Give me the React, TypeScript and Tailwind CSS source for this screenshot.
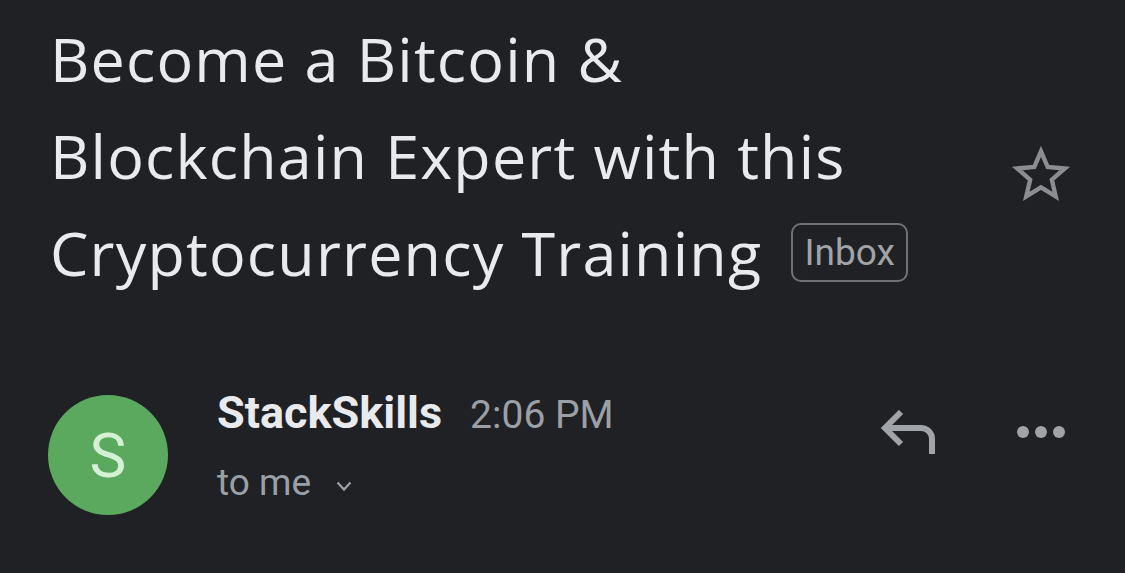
import React from "react";

export default function App() {
  return (
    <div
      className="w-[1125px] h-[573px] bg-[#202124] overflow-hidden"
      style={{ fontFamily: "Roboto, 'Noto Sans', sans-serif" }}
    >
      <div className="flex pl-[50px] pt-[10px]">
        <div
          className="w-[900px] text-[61px] leading-[97px] tracking-[1.2px] text-[#e8eaed]"
          style={{ fontFamily: "'Open Sans', 'Noto Sans', sans-serif" }}
        >
          <div>Become a Bitcoin &amp;</div>
          <div>Blockchain Expert with this</div>
          <div className="flex items-center">
            <span>Cryptocurrency Training</span>
            <span
              className="ml-[29px] flex items-center justify-center h-[59px] w-[117px] border-[2px] border-[#6e7175] rounded-[10px] text-[37px] leading-none tracking-normal text-[#a0a3a7]"
              style={{ fontFamily: "Roboto, sans-serif" }}
            >
              Inbox
            </span>
          </div>
        </div>
        <div className="ml-[60px] mt-[133px]">
          <svg width="62" height="62" viewBox="0 0 24 24">
            <path
              d="M12 3.2l2.6 6.1 6.6.55-5 4.35 1.5 6.45L12 17.2l-5.7 3.45 1.5-6.45-5-4.35 6.6-.55z"
              fill="none"
              stroke="#8a8d91"
              strokeWidth="1.7"
              strokeLinejoin="miter"
            />
          </svg>
        </div>
      </div>
      <div className="flex items-start pl-[48px] mt-[94px]">
        <div className="w-[120px] h-[120px] rounded-full bg-[#5aa95e] flex items-center justify-center text-[62px] text-[#d4f0d5]">
          S
        </div>
        <div className="ml-[49px] mt-[-4px]">
          <div className="flex items-baseline h-[44px] leading-[44px]">
            <span className="text-[45px] font-bold text-[#e8eaed]">StackSkills</span>
            <span className="ml-[28px] text-[39px] text-[#9aa0a6]">2:06 PM</span>
          </div>
          <div className="flex items-center mt-[26px] h-[44px] leading-[44px] text-[37px] text-[#9aa0a6]">
            <span>to me</span>
            <svg className="ml-[25px] mt-[6px]" width="16" height="11" viewBox="0 0 16 11">
              <path d="M1.5 1.5l6.5 7 6.5-7" fill="none" stroke="#9aa0a6" strokeWidth="2.3" />
            </svg>
          </div>
        </div>
        <div className="ml-auto flex items-center mt-[15px] pr-[60px]">
          <svg width="56" height="44" viewBox="0 0 56 44">
            <path
              d="M21 2L5 18l16 16M5 18h36a11 11 0 0 1 11 11v15"
              fill="none"
              stroke="#a0a3a7"
              strokeWidth="6"
            />
          </svg>
          <div className="ml-[81px] flex gap-[6px]">
            <span className="w-[12px] h-[12px] rounded-full bg-[#a0a3a7]" />
            <span className="w-[12px] h-[12px] rounded-full bg-[#a0a3a7]" />
            <span className="w-[12px] h-[12px] rounded-full bg-[#a0a3a7]" />
          </div>
        </div>
      </div>
    </div>
  );
}
